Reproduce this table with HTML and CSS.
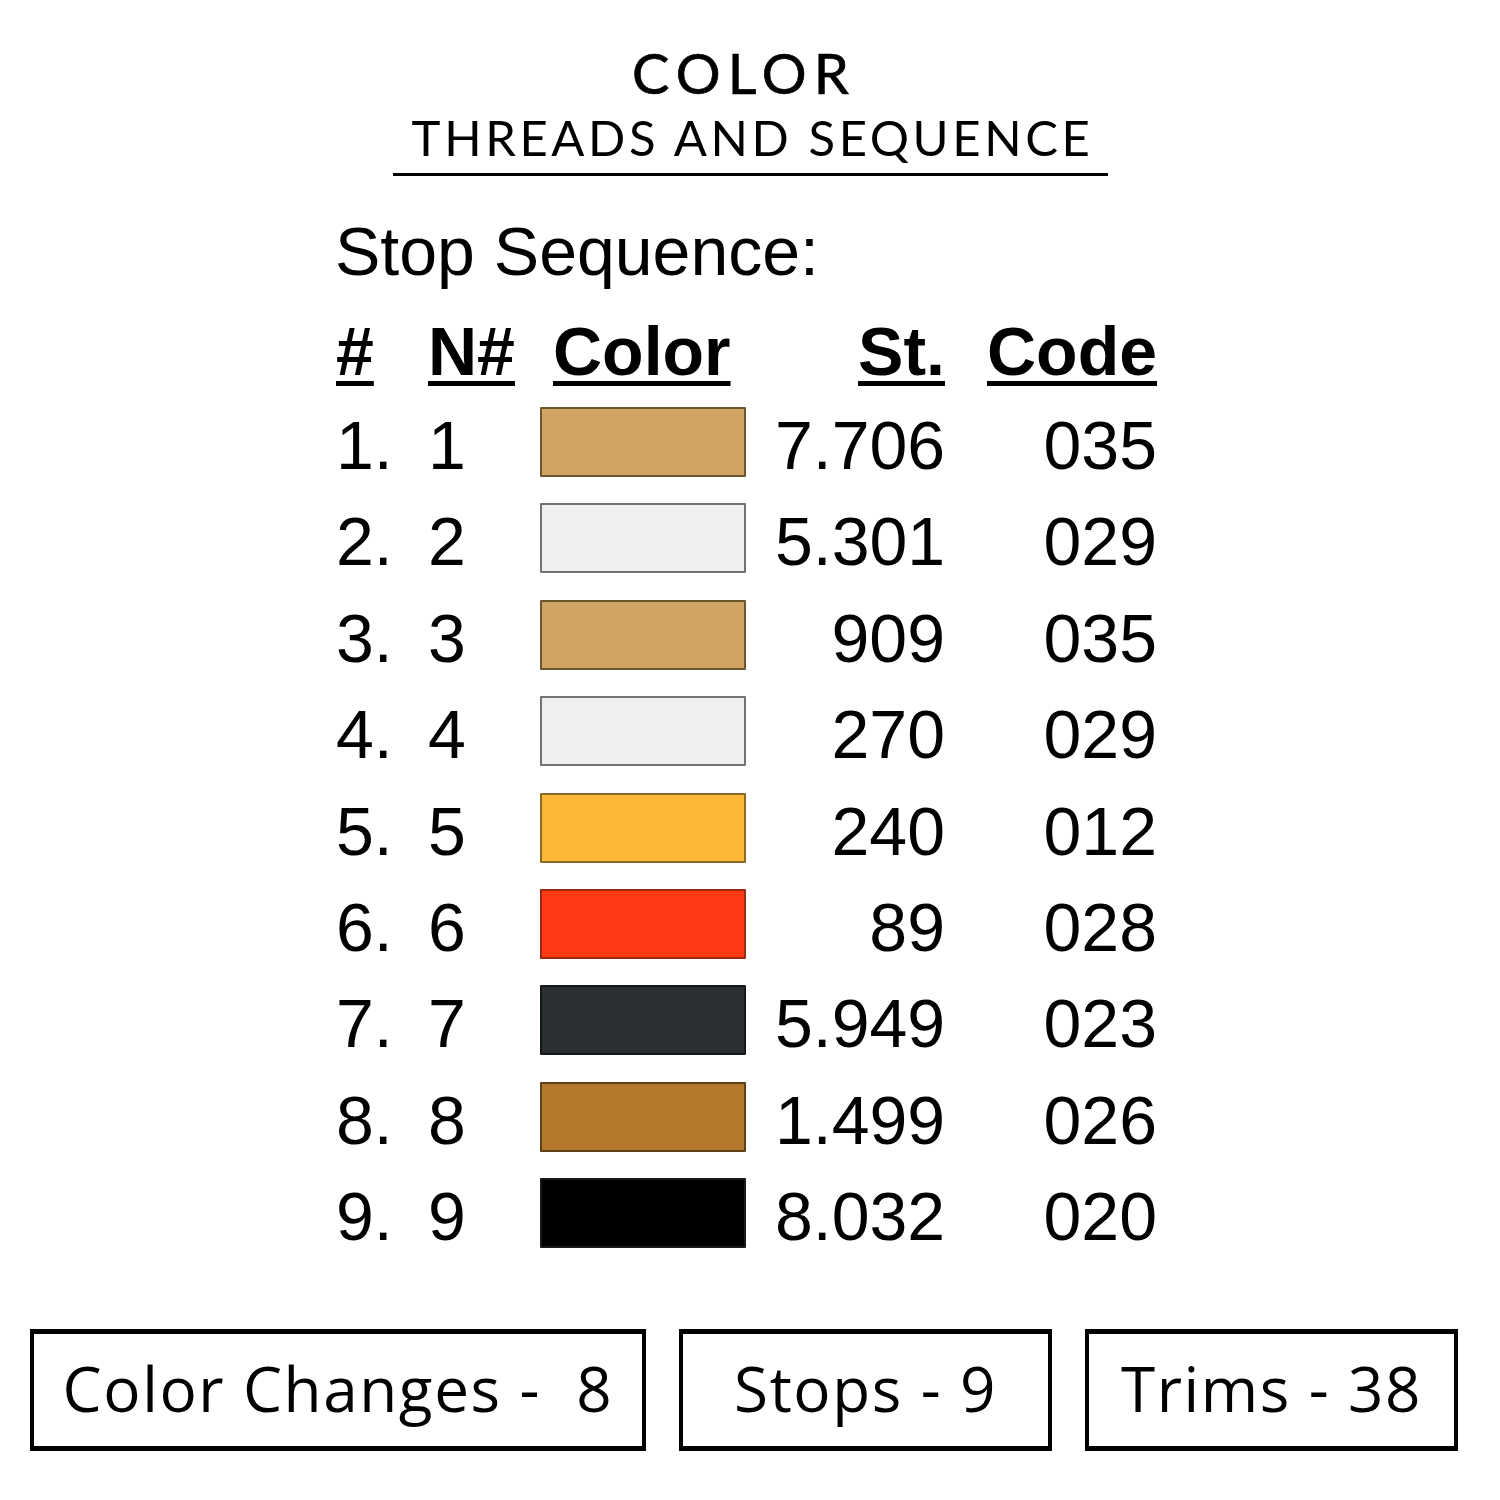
FILE: index.html
```html
<!DOCTYPE html>
<html>
<head>
<meta charset="utf-8">
<link rel="stylesheet" href="styles.css">
</head>
<body>
<div class="page">
  <header class="title">
    <div class="title-main">COLOR</div>
    <div class="title-sub">THREADS AND SEQUENCE</div>
  </header>

  <section class="sequence">
    <div class="seq-label">Stop Sequence:</div>
    <div class="table">
      <div class="row head">
        <span class="c-num"><u>#</u></span>
        <span class="c-n"><u>N#</u></span>
        <span class="c-color"><u>Color</u></span>
        <span class="c-st"><u>St.</u></span>
        <span class="c-code"><u>Code</u></span>
      </div>
      <div class="row"><span class="c-num">1.</span><span class="c-n">1</span><span class="c-color"><i class="sw sw-tan"></i></span><span class="c-st">7.706</span><span class="c-code">035</span></div>
      <div class="row"><span class="c-num">2.</span><span class="c-n">2</span><span class="c-color"><i class="sw sw-white"></i></span><span class="c-st">5.301</span><span class="c-code">029</span></div>
      <div class="row"><span class="c-num">3.</span><span class="c-n">3</span><span class="c-color"><i class="sw sw-tan"></i></span><span class="c-st">909</span><span class="c-code">035</span></div>
      <div class="row"><span class="c-num">4.</span><span class="c-n">4</span><span class="c-color"><i class="sw sw-white"></i></span><span class="c-st">270</span><span class="c-code">029</span></div>
      <div class="row"><span class="c-num">5.</span><span class="c-n">5</span><span class="c-color"><i class="sw sw-yellow"></i></span><span class="c-st">240</span><span class="c-code">012</span></div>
      <div class="row"><span class="c-num">6.</span><span class="c-n">6</span><span class="c-color"><i class="sw sw-red"></i></span><span class="c-st">89</span><span class="c-code">028</span></div>
      <div class="row"><span class="c-num">7.</span><span class="c-n">7</span><span class="c-color"><i class="sw sw-charcoal"></i></span><span class="c-st">5.949</span><span class="c-code">023</span></div>
      <div class="row"><span class="c-num">8.</span><span class="c-n">8</span><span class="c-color"><i class="sw sw-brown"></i></span><span class="c-st">1.499</span><span class="c-code">026</span></div>
      <div class="row"><span class="c-num">9.</span><span class="c-n">9</span><span class="c-color"><i class="sw sw-black"></i></span><span class="c-st">8.032</span><span class="c-code">020</span></div>
    </div>
  </section>

  <footer class="stats">
    <div class="stat stat-wide">Color Changes -&nbsp; 8</div>
    <div class="stat">Stops - 9</div>
    <div class="stat">Trims - 38</div>
  </footer>
</div>
</body>
</html>
```

FILE: styles.css
```css
* { box-sizing: border-box; }
html, body { margin: 0; padding: 0; background: #fff; }
body { width: 1500px; height: 1500px; color: #000; }

.page { padding-top: 40px; }

.title {
  width: 715px;
  margin-left: 393px;
  display: flex;
  flex-direction: column;
  align-items: center;
  font-family: Lato, "Open Sans", sans-serif;
  border-bottom: 3px solid #000;
  padding-bottom: 7px;
}
.title-main {
  font-size: 56px;
  line-height: 66px;
  font-weight: 400;
  -webkit-text-stroke: 0.7px #000;
  letter-spacing: 7.2px;
  margin-left: -13px;
}
.title-sub {
  margin-top: 2px;
  font-size: 49px;
  line-height: 58px;
  font-weight: 400;
  letter-spacing: 3.6px;
  margin-right: -4px;
}

.sequence {
  margin-left: 335px;
  font-family: "Liberation Sans", Arial, sans-serif;
  font-size: 68px;
}
.seq-label {
  margin-top: 35px;
  line-height: 80px;
}
.table { margin-top: 12px; }
.row {
  display: grid;
  grid-template-columns: 93px 112px 235px 170px 212px;
  height: 96.4px;
  line-height: 96px;
}
.row.head { height: 94px; font-weight: 700; }
.row.head u {
  text-decoration: underline;
  text-decoration-thickness: 5px;
  text-underline-offset: 6px;
}
.row.head .c-color { padding-left: 13px; }
.c-st, .c-code { text-align: right; }
.c-num { padding-left: 1px; }

.sw {
  display: block;
  width: 206px;
  height: 70px;
  margin-top: 10px;
  border: 2px solid #555;
  border-radius: 1px;
}
.sw-tan { background: #d0a563; border-color: #6e5530; }
.sw-white { background: #efefef; border-color: #737373; }
.sw-yellow { background: #fbb836; border-color: #8c6a22; }
.sw-red { background: #fe3a14; border-color: #9b2a14; }
.sw-charcoal { background: #2a2f31; border-color: #151819; }
.sw-brown { background: #b37829; border-color: #5e4118; }
.sw-black { background: #000; border-color: #1a1a1a; }

.stats {
  display: flex;
  gap: 33px;
  margin-left: 30px;
  margin-top: 64px;
  font-family: "Open Sans", sans-serif;
}
.stat {
  width: 373px;
  height: 122px;
  border: 4px solid #000;
  border-top-width: 5px;
  border-bottom-width: 5px;
  display: flex;
  align-items: center;
  justify-content: center;
  font-size: 62px;
  font-weight: 500;
  letter-spacing: 1.6px;
  padding-bottom: 4px;
}
.stat-wide { width: 616px; }
```
